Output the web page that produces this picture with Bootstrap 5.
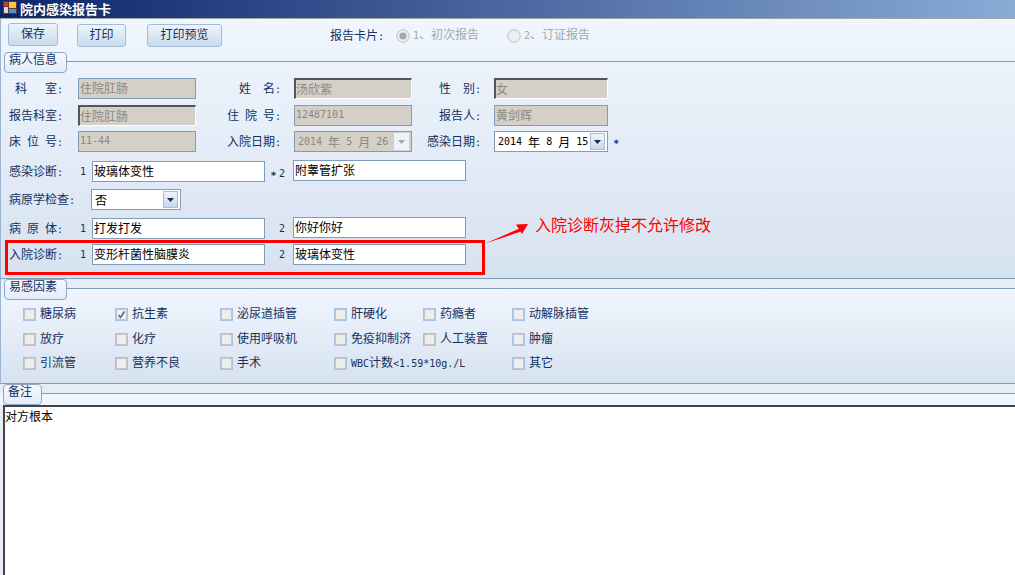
<!DOCTYPE html>
<html lang="zh">
<head>
<meta charset="utf-8">
<title>院内感染报告卡</title>
<link href="https://cdn.jsdelivr.net/npm/bootstrap@5.3.0/dist/css/bootstrap.min.css" rel="stylesheet">
<style>
html,body{height:575px;overflow:hidden}
body{position:relative;width:1015px;background:#e6edf7;font:12px/1.2 "Noto Sans CJK SC","Liberation Sans",sans-serif;color:#15305e}
.nm{font-family:"DejaVu Sans Mono",monospace;font-size:10px}
.astr{font-family:"DejaVu Sans Mono",monospace;font-size:10px;font-weight:700}
.titlebar{height:19px;background:linear-gradient(90deg,#0a246a,#8aabd6);border-bottom:1px solid #a3a89f;color:#fff;font-weight:700;font-size:13px;line-height:17px;padding-left:3px;gap:3px}
.pane-a{height:260px;background:linear-gradient(#f0f6fe,#d7e2f0);border-bottom:1px solid #7f9db9;border-left:1px solid #9db4d0}
.pane-b{height:105px;background:linear-gradient(#e6edf7 0,#e6edf7 9%,#f0f6fe 10%,#d7e2f0);border-bottom:1px solid #7f9db9;border-left:1px solid #9db4d0}
.tools{height:33px;padding-left:7px}
.tbtn{border:1px solid #a3bbd6;border-radius:3px;background:linear-gradient(#eef4fb,#c9daeb);color:#15305e;font-size:12px;height:23px;padding:0 0 3px;margin-top:5px}
.tb1{width:50px;margin-top:4px}.tb2{width:49px;margin-left:19px}.tb3{width:75px;margin-left:21px}
.cardlbl{margin-left:108px;margin-top:5px;width:66px;line-height:22px}
.rad{display:flex;align-items:center;gap:3px;color:#a3a8b0;margin-top:4px;height:22px}
.rad svg{margin-top:3px}
.r1{width:111px}
.ghead{height:21px;padding-left:3px;display:flex}
.gtab{height:21px;border:1px solid #8ca8c9;border-radius:4px;background:linear-gradient(#f4f8fe,#e4edf8);padding:0 9px 0 4px;line-height:12px;font-size:12px;color:#15305e;white-space:nowrap}
.gline{flex:1;height:10px;border-bottom:1px solid #7f9db9}
.frow{display:flex;height:21px}
.lbl{line-height:20px;text-align:right;white-space:pre;flex:none}
.la{width:62px;margin-right:15px}
.lb{width:85px;margin-right:13px}
.lc{width:69px;margin-right:13px}
.lx{width:77px;padding-left:8px;text-align:left}
.fld.form-control{width:118px;height:21px;border:1px solid #7f9db9;border-radius:0;background:#fff;color:#000;font-size:12px;line-height:17px;padding:0 1px 2px;box-shadow:none;min-height:0;flex:none}
.fld.form-control.nm{font-size:10px}
.fld.form-control:disabled,.fld.off.form-control{background:#d4d0c8;color:#8a8780;opacity:1}
.fld.off.form-control,.combo.form-control,.narrow.dt.form-control{padding:0 1px}
.fld.sunk.form-control{border-width:2px 1px 1px 2px;border-color:#555 #fff #fff #555;line-height:16px;padding:0 0 1px}
.narrow.form-control{width:114px}
.wide.form-control{width:173px}
.nmcell{width:14px;padding-left:2px;line-height:21px;flex:none}
.nmcell2{width:28px;text-align:right;padding-right:8px;line-height:21px;flex:none;white-space:pre}
.up1{margin-top:-1px}
.mt5{margin-top:5px}.mt6{margin-top:6px}.mt9{margin-top:9px}.mt7{margin-top:7px}.mt8{margin-top:8px}
.dateinner{display:flex;align-items:center;height:19px;overflow:hidden;padding-left:2px;white-space:pre;position:relative}
.ddb{position:absolute;right:1px;top:1px;width:15px;height:17px;border:1px solid #a9bdd6;background:linear-gradient(#f0f5fb,#c7d7ea);display:flex;align-items:center;justify-content:center}
.fld.off .ddb{background:#edf3fb;border-color:#edf3fb}
.combo.form-control{width:90px;margin-left:13px}
.ast{margin-left:5px;line-height:21px}
.ckgrid{display:grid;grid-template-columns:92px 105px 114px 89px 89px 1fr;grid-template-rows:25px 24px 24px;padding:5px 0 0 22px}
.ckitem{display:flex;align-items:center;gap:4px;white-space:nowrap;height:16px}
.ck{width:13px;height:13px;border:1px solid #aac2e2;background:#eee;box-shadow:inset 0 0 0 1px #c6c6c6;display:flex;flex:none;align-items:center;justify-content:center;margin-top:3px}
.memo{height:170px;width:1012px;margin-left:3px;display:block;border-width:2px 0 0 2px;border-style:solid;border-color:#444;border-radius:0;background:#fff;font-size:12px;line-height:16px;padding:1px 0 0;color:#000;resize:none;outline:0}
.notehead{background:linear-gradient(#e6edf7 45%,#f0f6fe 46%);height:21px}
.redbox{position:absolute;left:5px;top:240px;width:480px;height:35px;border:3px solid #f00;pointer-events:none}
.arrow{position:absolute;left:480px;top:218px}
.redtxt{position:absolute;left:535px;top:214px;color:#f00;font-size:16px;line-height:20px;white-space:nowrap}
</style>
</head>
<body>
<div class="titlebar d-flex align-items-start">
<svg width="14" height="14" viewBox="0 0 14 14"><rect x="0" y="1" width="14" height="13" fill="#5a3a32"/><rect x="1" y="2" width="4" height="4" fill="#d8382c"/><rect x="1" y="7" width="4" height="6" fill="#d9d6d0"/><rect x="6" y="2" width="7" height="6" fill="#f7c832"/><rect x="6" y="9" width="7" height="4" fill="#4f8fdc"/></svg>
<span>院内感染报告卡</span>
</div>

<section class="pane-a">
<div class="tools d-flex align-items-start">
<button type="button" class="btn tbtn tb1">保存</button>
<button type="button" class="btn tbtn tb2">打印</button>
<button type="button" class="btn tbtn tb3">打印预览</button>
<div class="cardlbl">报告卡片<span class="nm">:</span></div>
<div class="rad r1"><svg width="14" height="14" viewBox="0 0 14 14"><circle cx="7" cy="7" r="6.2" fill="#eee" stroke="#bdbdbd"/><circle cx="7" cy="7" r="3.6" fill="#a9a9a9"/></svg><span><span class="nm">1</span>、初次报告</span></div>
<div class="rad"><svg width="14" height="14" viewBox="0 0 14 14"><circle cx="7" cy="7" r="6.2" fill="#eee" stroke="#bdbdbd"/></svg><span><span class="nm">2</span>、订证报告</span></div>
</div>

<div class="ghead"><div class="gtab">病人信息</div><div class="gline"></div></div>

<div class="frow mt5">
<div class="lbl la">科&emsp;&ensp;室<span class="nm">:</span></div><input class="form-control fld" disabled value="住院肛肠">
<div class="lbl lb">姓&emsp;名<span class="nm">:</span></div><input class="form-control fld sunk" disabled value="汤欣紫">
<div class="lbl lc">性&emsp;别<span class="nm">:</span></div><input class="form-control fld sunk narrow" disabled value="女">
</div>
<div class="frow mt6">
<div class="lbl la">报告科室<span class="nm">:</span></div><input class="form-control fld sunk" disabled value="住院肛肠">
<div class="lbl lb">住&ensp;院&ensp;号<span class="nm">:</span></div><input class="form-control fld nm" disabled value="12487101">
<div class="lbl lc">报告人<span class="nm">:</span></div><input class="form-control fld narrow" disabled value="黄剑辉">
</div>
<div class="frow mt5">
<div class="lbl la">床&ensp;位&ensp;号<span class="nm">:</span></div><input class="form-control fld nm" disabled value="11-44">
<div class="lbl lb">入院日期<span class="nm">:</span></div>
<div class="form-control fld off"><div class="dateinner"><span class="nm">2014 </span>年<span class="nm"> 5 </span>月<span class="nm"> 26 </span>日<span class="ddb"><svg width="7" height="4"><path d="M0 0h7L3.5 4z" fill="#a9a9a9"/></svg></span></div></div>
<div class="lbl lc">感染日期<span class="nm">:</span></div>
<div class="form-control fld narrow dt"><div class="dateinner"><span class="nm">2014 </span>年<span class="nm"> 8 </span>月<span class="nm"> 15</span><span class="ddb"><svg width="7" height="4"><path d="M0 0h7L3.5 4z" fill="#15305e"/></svg></span></div></div>
<div class="ast astr">∗</div>
</div>

<div class="frow mt9">
<div class="lbl la">感染诊断<span class="nm">:</span></div><div class="nmcell nm">1</div><input class="form-control fld wide" value="玻璃体变性">
<div class="nmcell2"><span class="astr">∗</span> <span class="nm">2</span></div><input class="form-control fld wide up1" value="附睾管扩张">
</div>
<div class="frow mt7">
<div class="lbl lx">病原学检查<span class="nm">:</span></div>
<div class="form-control fld combo"><div class="dateinner">否<span class="ddb"><svg width="7" height="4"><path d="M0 0h7L3.5 4z" fill="#15305e"/></svg></span></div></div>
</div>
<div class="frow mt8">
<div class="lbl la">病&ensp;原&ensp;体<span class="nm">:</span></div><div class="nmcell nm">1</div><input class="form-control fld wide" value="打发打发">
<div class="nmcell2 nm">2</div><input class="form-control fld wide up1" value="你好你好">
</div>
<div class="frow mt5">
<div class="lbl la">入院诊断<span class="nm">:</span></div><div class="nmcell nm">1</div><input class="form-control fld wide" value="变形杆菌性脑膜炎">
<div class="nmcell2 nm">2</div><input class="form-control fld wide" value="玻璃体变性">
</div>
</section>

<section class="pane-b">
<div class="ghead"><div class="gtab">易感因素</div><div class="gline"></div></div>
<div class="ckgrid">
<div class="ckitem"><span class="ck"></span>糖尿病</div>
<div class="ckitem"><span class="ck"><svg width="9" height="9" viewBox="0 0 9 9"><path d="M1.5 5l2 2.5L7.5 1.5" fill="none" stroke="#4a6ea8" stroke-width="1.6"/></svg></span>抗生素</div>
<div class="ckitem"><span class="ck"></span>泌尿道插管</div>
<div class="ckitem"><span class="ck"></span>肝硬化</div>
<div class="ckitem"><span class="ck"></span>药瘾者</div>
<div class="ckitem"><span class="ck"></span>动解脉插管</div>
<div class="ckitem"><span class="ck"></span>放疗</div>
<div class="ckitem"><span class="ck"></span>化疗</div>
<div class="ckitem"><span class="ck"></span>使用呼吸机</div>
<div class="ckitem"><span class="ck"></span>免疫抑制济</div>
<div class="ckitem"><span class="ck"></span>人工装置</div>
<div class="ckitem"><span class="ck"></span>肿瘤</div>
<div class="ckitem"><span class="ck"></span>引流管</div>
<div class="ckitem"><span class="ck"></span>营养不良</div>
<div class="ckitem"><span class="ck"></span>手术</div>
<div class="ckitem"><span class="ck"></span><span><span class="nm">WBC</span>计数<span class="nm">&lt;1.59*10g./L</span></span></div>
<div></div>
<div class="ckitem"><span class="ck"></span>其它</div>
</div>
</section>

<div class="ghead notehead"><div class="gtab">备注</div><div class="gline"></div></div>
<textarea class="memo" readonly>对方根本</textarea>

<div class="redbox"></div>
<svg class="arrow" width="52" height="30" viewBox="0 0 52 30"><path d="M5 25.500L39.500 10.500L41 13.500z" fill="#f00"/><path d="M48 6L36 6.500L42 16z" fill="#f00"/></svg>
<div class="redtxt">入院诊断灰掉不允许修改</div>
</body>
</html>
